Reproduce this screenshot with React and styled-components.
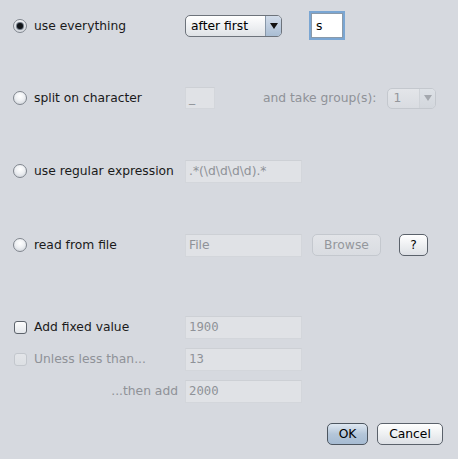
import React from "react";
import styled, { createGlobalStyle, css } from "styled-components";

const Global = createGlobalStyle`
  html, body { margin: 0; padding: 0; background: #d6d9df; }
  body { font-family: "DejaVu Sans", sans-serif; font-size: 12.3px; color: #000; }
  * { box-sizing: border-box; }
`;

const Dialog = styled.div`
  width: 458px;
  height: 459px;
  background: #d6d9df;
  padding: 13px 15px 0 13px;
  display: flex;
  flex-direction: column;
`;

const OptionRow = styled.div`
  display: grid;
  grid-template-columns: 172px auto;
  align-items: center;
  height: 24px;
  margin-top: ${(p) => p.$mt || 0}px;
`;

const Controls = styled.div`
  display: flex;
  align-items: center;
`;

const LabelCell = styled.div`
  display: flex;
  align-items: center;
  gap: 7px;
  white-space: nowrap;
  color: ${(p) => (p.$disabled ? "#8f9298" : "#1a1a1a")};
  justify-content: ${(p) => (p.$right ? "flex-end" : "flex-start")};
  padding-right: ${(p) => (p.$right ? "7px" : "0")};
`;

const RadioCircle = styled.span`
  width: 14px;
  height: 14px;
  border-radius: 50%;
  border: 1px solid #80868e;
  background: radial-gradient(circle at 50% 35%, #ffffff 0%, #eef0f3 45%, #c9ced5 100%);
  display: flex;
  align-items: center;
  justify-content: center;
  flex: none;
  &::after {
    content: "";
    display: ${(p) => (p.$checked ? "block" : "none")};
    width: 6px;
    height: 6px;
    border-radius: 50%;
    background: #101418;
    box-shadow: 0 0 1px 1px #5f6a78;
  }
`;

const CheckBox = styled.span`
  width: 13px;
  height: 13px;
  margin-left: 1px;
  border-radius: 3px;
  flex: none;
  ${(p) =>
    p.$disabled
      ? css`
          border: 1px solid #c3c7cd;
          background: linear-gradient(#e3e5e9, #dcdfe3);
        `
      : css`
          border: 1px solid #5d636b;
          background: linear-gradient(#fdfdfd, #e4e7eb);
        `}
`;

const Field = styled.div`
  width: ${(p) => p.$w || 117}px;
  height: ${(p) => p.$h || 23}px;
  margin-left: ${(p) => p.$ml || 0}px;
  display: flex;
  align-items: center;
  padding-left: 3px;
  white-space: nowrap;
  overflow: hidden;
  font-family: ${(p) => (p.$mono ? '"DejaVu Sans Mono", monospace' : '"DejaVu Sans", sans-serif')};
  font-size: ${(p) => p.$fs || 12.3}px;
  ${(p) =>
    p.$focused
      ? css`
          background: #fff;
          border: 1px solid #8a9aaa;
          box-shadow: 0 0 0 2px #7aa6d3;
          color: #000;
          padding-left: 4px;
        `
      : css`
          background: #e0e2e6;
          border: 1px solid #d3d6db;
          border-top-color: #cdd0d5;
          color: #8f9298;
        `}
`;

const Combo = styled.div`
  width: ${(p) => p.$w}px;
  height: ${(p) => p.$h || 22}px;
  margin-left: ${(p) => p.$ml || 0}px;
  border-radius: 5px;
  display: flex;
  overflow: hidden;
  ${(p) =>
    p.$disabled
      ? css`
          border: 1px solid #c4c8ce;
          color: #94979c;
          background: linear-gradient(#e3e5e9, #d9dce1);
        `
      : css`
          border: 1px solid #6d737b;
          color: #000;
          background: linear-gradient(#ffffff, #eceef1 60%, #dfe2e6);
        `}
`;

const ComboText = styled.div`
  flex: 1;
  display: flex;
  align-items: center;
  padding-left: 5px;
  font-size: ${(p) => p.$fs || 12.3}px;
`;

const ComboArrow = styled.div`
  width: 16px;
  display: flex;
  align-items: center;
  justify-content: center;
  ${(p) =>
    p.$disabled
      ? css`
          border-left: 1px solid #cfd3d8;
          background: linear-gradient(#dde1e6, #d3d7dd);
          color: #a4a8ae;
        `
      : css`
          border-left: 1px solid #8897a8;
          background: linear-gradient(#d2dcea, #a9bdd3);
          color: #111;
        `}
  &::after {
    content: "";
    border-left: 4px solid transparent;
    border-right: 4px solid transparent;
    border-top: 6px solid currentColor;
  }
`;

const Button = styled.div`
  width: ${(p) => p.$w}px;
  height: 22px;
  margin-left: ${(p) => p.$ml || 0}px;
  border-radius: 5px;
  display: flex;
  align-items: center;
  justify-content: center;
  font-size: 12.3px;
  ${(p) =>
    p.$disabled
      ? css`
          border: 1px solid #c4c8ce;
          color: #94979c;
          background: linear-gradient(#e2e4e8, #d9dce1);
        `
      : p.$default
      ? css`
          border: 1px solid #4d5660;
          color: #000;
          background: linear-gradient(#dfe8f2, #b4c6d9 50%, #a6bbd2);
        `
      : css`
          border: 1px solid #5b626b;
          color: #000;
          background: linear-gradient(#ffffff, #eef0f2 50%, #dde0e5);
        `}
`;

const GroupLabel = styled.span`
  color: #8f9298;
  margin-left: 48px;
  margin-right: 11px;
  white-space: nowrap;
`;

const ButtonBar = styled.div`
  display: flex;
  justify-content: flex-end;
  margin-top: 20px;
`;

export default function App() {
  return (
    <>
      <Global />
      <Dialog>
        <OptionRow>
          <LabelCell>
            <RadioCircle $checked />
            use everything
          </LabelCell>
          <Controls>
            <Combo $w={97}>
              <ComboText>after first</ComboText>
              <ComboArrow />
            </Combo>
            <Field $focused $w={32} $h={25} $ml={29}>s</Field>
          </Controls>
        </OptionRow>

        <OptionRow $mt={49}>
          <LabelCell>
            <RadioCircle />
            split on character
          </LabelCell>
          <Controls>
            <Field $w={30} $h={22}>_</Field>
            <GroupLabel>and take group(s):</GroupLabel>
            <Combo $w={49} $h={21} $disabled>
              <ComboText>1</ComboText>
              <ComboArrow $disabled />
            </Combo>
          </Controls>
        </OptionRow>

        <OptionRow $mt={49}>
          <LabelCell>
            <RadioCircle />
            use regular expression
          </LabelCell>
          <Controls>
            <Field $fs={12.3}>.*(\d\d\d\d).*</Field>
          </Controls>
        </OptionRow>

        <OptionRow $mt={50}>
          <LabelCell>
            <RadioCircle />
            read from file
          </LabelCell>
          <Controls>
            <Field>File</Field>
            <Button $w={69} $ml={10} $disabled>Browse</Button>
            <Button $w={29} $ml={18}>?</Button>
          </Controls>
        </OptionRow>

        <OptionRow $mt={58}>
          <LabelCell>
            <CheckBox />
            Add fixed value
          </LabelCell>
          <Controls>
            <Field $mono>1900</Field>
          </Controls>
        </OptionRow>

        <OptionRow $mt={8}>
          <LabelCell $disabled>
            <CheckBox $disabled />
            Unless less than...
          </LabelCell>
          <Controls>
            <Field $mono>13</Field>
          </Controls>
        </OptionRow>

        <OptionRow $mt={8}>
          <LabelCell $disabled $right>...then add</LabelCell>
          <Controls>
            <Field $mono>2000</Field>
          </Controls>
        </OptionRow>

        <ButtonBar>
          <Button $w={41} $default>OK</Button>
          <Button $w={66} $ml={9}>Cancel</Button>
        </ButtonBar>
      </Dialog>
    </>
  );
}
